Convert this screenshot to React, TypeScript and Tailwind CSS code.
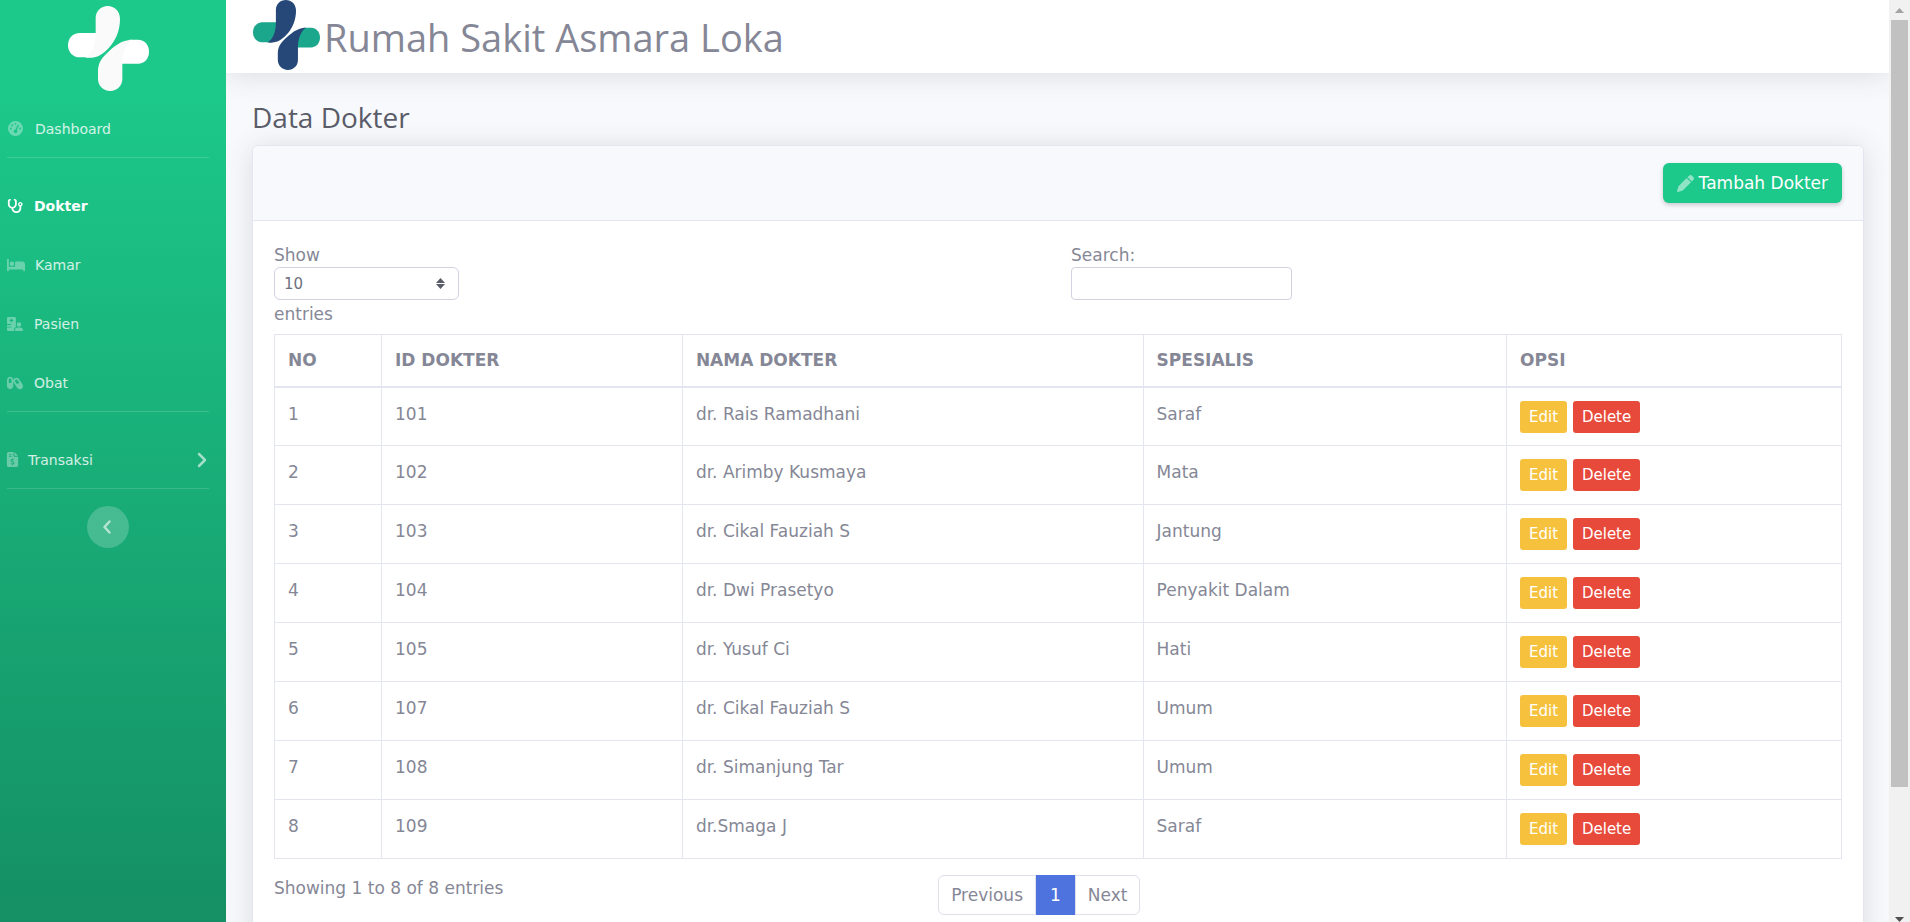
import type { ReactNode } from "react";
import { FaGaugeHigh, FaStethoscope, FaBed, FaHospitalUser, FaCapsules, FaFileInvoiceDollar, FaPen } from "react-icons/fa6";

const doctors = [
  { id: "101", name: "dr. Rais Ramadhani", field: "Saraf" },
  { id: "102", name: "dr. Arimby Kusmaya", field: "Mata" },
  { id: "103", name: "dr. Cikal Fauziah S", field: "Jantung" },
  { id: "104", name: "dr. Dwi Prasetyo", field: "Penyakit Dalam" },
  { id: "105", name: "dr. Yusuf Ci", field: "Hati" },
  { id: "107", name: "dr. Cikal Fauziah S", field: "Umum" },
  { id: "108", name: "dr. Simanjung Tar", field: "Umum" },
  { id: "109", name: "dr.Smaga J", field: "Saraf" },
];

const columns = ["NO", "ID DOKTER", "NAMA DOKTER", "SPESIALIS", "OPSI"];

const headingFont = "font-['Segoe_UI','Open_Sans','Noto_Sans',sans-serif]";
const cell = "border border-[#e3e6f0] px-[13px] pt-[14px]";

// Hospital cross: two side arms tucked behind two curved lobes.
function Cross({ className, arm, body }: { className: string; arm: string; body: string }) {
  return (
    <svg viewBox="24 17 243 255" preserveAspectRatio="none" className={className} aria-hidden="true">
      <path fill={arm} d="M110 98H60C38 98 24 114 24 134.500S38 171 60 171h32c13-20 18-45 18-73z" />
      <path fill={arm} d="M208 118h26c20 0 33 16 33 36s-13 36-33 36h-50c0-30 8-55 24-72z" />
      <path fill={body} d="M107 53C107 32 123 17 143 17s37 15 37 38c0 34-12 64-33 87-20 22-38 33-71 30 22-13 31-40 31-74z" />
      <path fill={body} d="M187 190v46c0 21-16 36-36.500 36S114 256 114 236v-23c0-22 8-36 22-50 26-26 48-44 80-45-22 15-29 46-29 72z" />
    </svg>
  );
}

function Chevron({ className, d }: { className: string; d: string }) {
  return (
    <svg viewBox="0 0 10 16" className={`h-4 w-[10px] ${className}`} fill="none" stroke="currentColor" strokeWidth="2.500" strokeLinecap="round" strokeLinejoin="round" aria-hidden="true">
      <path d={d} />
    </svg>
  );
}

function Rule() {
  return <hr className="mr-[17px] ml-[7px] border-white/15" />;
}

function NavItem({ icon, label, active = false, gap = "gap-[11px]" }: { icon: ReactNode; label: string; active?: boolean; gap?: string }) {
  return (
    <a
      href="#"
      className={`flex h-[59px] items-center px-[7px] pt-[2px] text-[14px] ${gap} ${active ? "font-bold text-white" : "text-white/80"}`}
    >
      <span className={active ? "text-white" : "text-white/35"}>{icon}</span>
      {label}
    </a>
  );
}

export default function App() {
  return (
    <div className="flex h-screen overflow-hidden bg-[#f8f9fc] font-[Verdana,'DejaVu_Sans',sans-serif] text-[17px] leading-6 text-[#858796]">
      <nav className="flex w-[226px] shrink-0 flex-col bg-linear-to-b from-[#1cc88a] from-10% to-[#13855c] to-[118%]">
        <a href="#" aria-label="Beranda" className="flex h-[98px] justify-center pt-[6px] pr-[9px]">
          <Cross className="h-[85px] w-[81px]" arm="#ffffff" body="#fafafa" />
        </a>
        <NavItem icon={<FaGaugeHigh size={15} />} label="Dashboard" gap="gap-3 pl-[8px]" />
        <Rule />
        <div className="pt-[17px]">
          <NavItem icon={<FaStethoscope size={16} />} label="Dokter" active />
          <NavItem icon={<FaBed size={18} />} label="Kamar" gap="gap-[10px]" />
          <NavItem icon={<FaHospitalUser size={16} />} label="Pasien" />
          <NavItem icon={<FaCapsules size={16} />} label="Obat" />
        </div>
        <Rule />
        <div className="pt-[17px]">
          <a href="#" className="flex h-[59px] items-center gap-2 pt-[2px] pr-[19px] pl-[5px] text-[14px] text-white/80">
            <FaFileInvoiceDollar size={15} className="text-white/35" />
            Transaksi
            <Chevron className="ml-auto text-white/60" d="M2 2l6 6-6 6" />
          </a>
        </div>
        <Rule />
        <button type="button" aria-label="Ciutkan menu" className="mt-[17px] ml-[87px] flex size-[42px] items-center justify-center rounded-full bg-white/20 pr-[2px] text-white/60">
          <Chevron className="" d="M7.500 2.500L2.500 8l5 5.500" />
        </button>
      </nav>

      <div className="flex min-w-0 flex-1 flex-col overflow-hidden">
        <header className="flex h-[73px] shrink-0 items-start bg-white pl-[27px] shadow-[0_2px_28px_0_rgba(58,59,69,0.15)]">
          <Cross className="h-[70px] w-[67px]" arm="#1aa78c" body="#254878" />
          <span className={`mt-[13px] ml-1 text-[38px] leading-[48px] whitespace-nowrap ${headingFont}`}>Rumah Sakit Asmara Loka</span>
        </header>

        <main className="pt-[26px] pr-[25px] pl-[26px]">
          <h1 className={`mb-[10px] text-[28px] leading-9 text-[#5a5c69] ${headingFont}`}>Data Dokter</h1>
          <section className="rounded-[6px] border border-[#e3e6f0] bg-white shadow-[0_2px_28px_0_rgba(58,59,69,0.15)]">
            <div className="flex justify-end rounded-t-[6px] border-b border-[#e3e6f0] bg-[#f8f9fc] px-[21px] py-[17px]">
              <button type="button" className="flex h-10 items-center gap-[5px] rounded-[6px] bg-[#1cc88a] px-[14px] text-white shadow-[0_2px_4px_rgba(58,59,69,0.25)]">
                <FaPen size={17} className="text-white/50" />
                Tambah Dokter
              </button>
            </div>
            <div className="px-[21px] pt-[22px] pb-16">
              <div className="grid grid-cols-2 gap-x-[26px]">
                <label className="flex flex-col items-start">
                  Show
                  <span className="relative mb-[2px]">
                    <select className="block h-[33px] w-[185px] appearance-none rounded-[6px] border border-[#d1d3e2] bg-white px-[9px] text-[15px] text-[#6e707e]">
                      <option>10</option>
                    </select>
                    <svg viewBox="0 0 9 11" className="pointer-events-none absolute top-[11px] right-[14px] h-[11px] w-[9px]" aria-hidden="true">
                      <path fill="#5a5c69" d="M0 5 4.500 0 9 5zM0 6h9L4.500 11z" />
                    </svg>
                  </span>
                  entries
                </label>
                <label className="flex flex-col items-start">
                  Search:
                  <input type="search" className="h-[33px] w-[221px] rounded-[4px] border border-[#d1d3e2] bg-white px-2 text-[15px]" />
                </label>
              </div>
              <table className="mt-[8px] w-full table-fixed border-collapse border border-[#e3e6f0] text-left">
                <colgroup>
                  <col className="w-[6.830%]" />
                  <col className="w-[19.200%]" />
                  <col className="w-[29.400%]" />
                  <col className="w-[23.200%]" />
                  <col />
                </colgroup>
                <thead>
                  <tr className="h-[52px] border-b-2 border-[#e3e6f0]">
                    {columns.map((c) => (
                      <th key={c} className="border-x border-[#e3e6f0] px-[13px] font-bold">{c}</th>
                    ))}
                  </tr>
                </thead>
                <tbody>
                  {doctors.map((d, i) => (
                    <tr key={d.id} className="h-[59px] align-top">
                      <td className={cell}>{i + 1}</td>
                      <td className={cell}>{d.id}</td>
                      <td className={cell}>{d.name}</td>
                      <td className={cell}>{d.field}</td>
                      <td className="border border-[#e3e6f0] px-[13px] pt-[13px]">
                        <div className="flex gap-[6px] text-[15px] text-white">
                          <button type="button" className="h-8 w-[47px] rounded-[3px] bg-[#f6c23e]">Edit</button>
                          <button type="button" className="h-8 w-[67px] rounded-[3px] bg-[#e74a3b]">Delete</button>
                        </div>
                      </td>
                    </tr>
                  ))}
                </tbody>
              </table>
              <div className="mt-4 grid grid-cols-12 items-start gap-x-[26px]">
                <p className="col-span-5 pt-[1px]">Showing 1 to 8 of 8 entries</p>
                <div className="col-span-7 flex h-10">
                  <a href="#" className="flex items-center rounded-l-[6px] border border-[#dddfeb] px-3">Previous</a>
                  <a href="#" className="flex items-center bg-[#4e73df] px-[14px] text-white">1</a>
                  <a href="#" className="flex items-center rounded-r-[6px] border border-[#dddfeb] px-3">Next</a>
                </div>
              </div>
            </div>
          </section>
        </main>
      </div>

      <div aria-hidden="true" className="flex w-[21px] shrink-0 flex-col items-center bg-[#f1f1f1]">
        <svg viewBox="0 0 21 20" className="h-5 w-[21px]"><path fill="#a3a3a3" d="M6 13h9l-4.500-5z" /></svg>
        <div className="min-h-0 flex-[767] w-[17px] bg-[#c1c1c1]" />
        <div className="min-h-0 flex-[115]" />
        <svg viewBox="0 0 21 20" className="h-5 w-[21px]"><path fill="#505050" d="M6 15h9l-4.500 5z" /></svg>
      </div>
    </div>
  );
}
